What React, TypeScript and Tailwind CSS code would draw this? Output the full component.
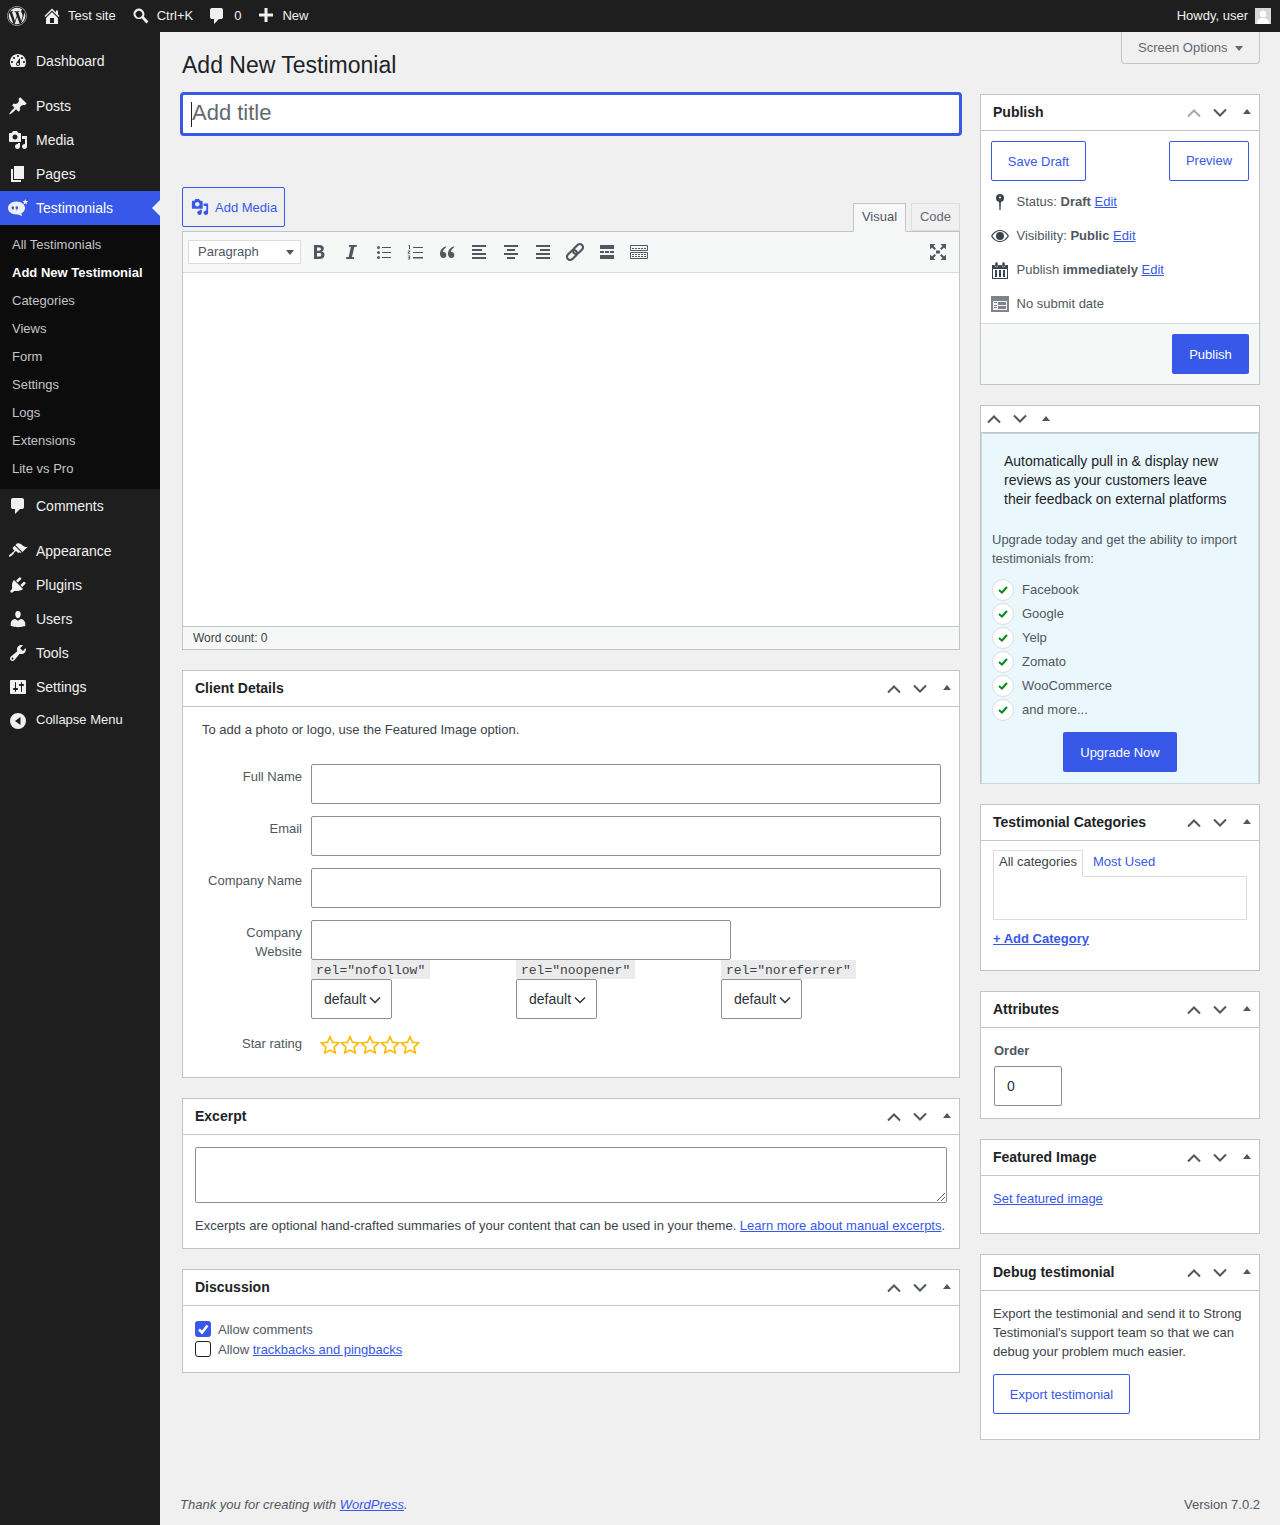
import React from "react";
import { FaWordpress } from "react-icons/fa";

const P = {
  home: "M16 8.5l1.53 1.53-1.06 1.06L10 4.62l-6.47 6.47-1.06-1.06L10 2.5l4 4v-2h2v4zm-6-2.46l6 5.99V18H4v-5.97zM12 17v-5H8v5h4z",
  comment: "M5 2h9q.82 0 1.41.59T16 4v7q0 .82-.59 1.41T14 13h-2l-5 5v-5H5q-.82 0-1.41-.59T3 11V4q0-.82.59-1.41T5 2z",
  plus: "M17 7.5v3h-5.5V16h-3v-5.5H3v-3h5.5V2h3v5.5H17z",
  dashboard: "M3.76 16h12.48c1.1-1.37 1.76-3.11 1.76-5 0-4.42-3.58-8-8-8s-8 3.58-8 8c0 1.89.66 3.63 1.76 5zM10 4c.55 0 1 .45 1 1s-.45 1-1 1-1-.45-1-1 .45-1 1-1zM6 6c.55 0 1 .45 1 1s-.45 1-1 1-1-.45-1-1 .45-1 1-1zm8 0c.55 0 1 .45 1 1s-.45 1-1 1-1-.45-1-1 .45-1 1-1zm-5.37 5.55L12 7v6c0 1.1-.9 2-2 2s-2-.9-2-2c0-.57.24-1.08.63-1.45zM4 10c.55 0 1 .45 1 1s-.45 1-1 1-1-.45-1-1 .45-1 1-1zm12 0c.55 0 1 .45 1 1s-.45 1-1 1-1-.45-1-1 .45-1 1-1zm-5 3c0-.55-.45-1-1-1s-1 .45-1 1 .45 1 1 1 1-.45 1-1z",
  pin: "M10.44 3.02l1.82-1.82 6.36 6.35-1.83 1.82c-1.05-.68-2.48-.57-3.41.36l-.75.75c-.92.93-1.04 2.35-.35 3.41l-1.83 1.82-2.41-2.41-2.8 2.79c-.42.42-3.38 2.71-3.8 2.29s1.86-3.39 2.28-3.81l2.79-2.79L4.1 9.36l1.83-1.82c1.05.69 2.48.57 3.4-.36l.75-.75c.93-.92 1.05-2.35.36-3.41z",
  media: "M13 11V4c0-.55-.45-1-1-1h-1.67L9 1H5L3.67 3H2c-.55 0-1 .45-1 1v7c0 .55.45 1 1 1h10c.55 0 1-.45 1-1zM7 4.5c1.38 0 2.5 1.12 2.5 2.5S8.38 9.5 7 9.5 4.5 8.38 4.5 7 5.62 4.5 7 4.5zM14 6h5v10.5c0 1.38-1.12 2.5-2.5 2.5S14 17.88 14 16.5s1.12-2.5 2.5-2.5c.17 0 .34.02.5.05V9h-3V6zm-4 8.05V13h2v3.5c0 1.38-1.12 2.5-2.5 2.5S7 17.88 7 16.5 8.12 14 9.5 14c.17 0 .34.02.5.05z",
  pages: "M6 15V2h10v13H6zm-1 1h8v2H3V5h2v11z",
  appearance: "M14.48 11.06L7.41 3.99l1.5-1.5c.5-.56 2.3-.47 3.51.32 1.21.8 1.43 1.28 2.91 2.1 1.18.64 2.45 1.26 4.45.85zm-.71.71L6.7 4.7 4.93 6.47c-.39.39-.39 1.02 0 1.41l1.06 1.06c.39.39.39 1.03 0 1.42-.6.6-1.43 1.11-2.21 1.69-.35.26-.7.53-1.01.84C1.43 13.23.4 14.75 1.1 15.45c.7.71 2.22-.33 3.56-1.67.31-.31.58-.66.85-1.02.57-.78 1.08-1.61 1.69-2.21.39-.39 1.02-.39 1.41 0l1.06 1.06c.39.39 1.02.39 1.41 0z",
  plugins: "M13.11 4.36L9.87 7.6 8 5.73l3.24-3.24c.35-.34 1.05-.2 1.56.32.52.51.66 1.21.31 1.55zm-8 1.77l.91-1.12 9.01 9.01-1.19.84c-.71.71-2.63 1.16-3.82 1.16H6.14L4.9 17.26c-.59.59-1.54.59-2.12 0-.59-.58-.59-1.53 0-2.12l1.24-1.24v-3.88c0-1.13.4-3.19 1.09-3.89zm7.26 3.97l3.24-3.24c.34-.35 1.04-.21 1.55.31.52.51.66 1.21.31 1.55l-3.24 3.25z",
  users: "M10 9.25c-2.27 0-2.73-3.44-2.73-3.44C7 4.02 7.82 2 9.97 2c2.16 0 2.98 2.02 2.71 3.81 0 0-.41 3.44-2.68 3.44zm0 2.57L12.72 10c2.39 0 4.52 2.33 4.52 4.53v2.49s-3.65 1.13-7.24 1.13c-3.65 0-7.24-1.13-7.24-1.13v-2.49c0-2.25 1.94-4.48 4.47-4.48z",
  tools: "M16.68 9.77c-1.34 1.34-3.3 1.67-4.95.99l-5.41 6.52c-.99.99-2.59.99-3.58 0s-.99-2.59 0-3.57l6.52-5.42c-.68-1.65-.35-3.61.99-4.95 1.28-1.28 3.12-1.62 4.72-1.06l-2.89 2.89 2.82 2.82 2.86-2.87c.53 1.58.18 3.39-1.08 4.67zM3.81 16.21c.4.39 1.04.39 1.43 0 .4-.4.4-1.04 0-1.43-.39-.4-1.03-.4-1.43 0-.39.39-.39 1.03 0 1.43z",
  settings: "M18 16V4c0-.55-.45-1-1-1H3c-.55 0-1 .45-1 1v12c0 .55.45 1 1 1h14c.55 0 1-.45 1-1zM8 11h1c.55 0 1 .45 1 1s-.45 1-1 1H8v1.5c0 .28-.22.5-.5.5s-.5-.22-.5-.5V13H6c-.55 0-1-.45-1-1s.45-1 1-1h1V5.5c0-.28.22-.5.5-.5s.5.22.5.5V11zm5-2h-1c-.55 0-1-.45-1-1s.45-1 1-1h1V5.5c0-.28.22-.5.5-.5s.5.22.5.5V7h1c.55 0 1 .45 1 1s-.45 1-1 1h-1v5.5c0 .28-.22.5-.5.5s-.5-.22-.5-.5V9z",
  collapse: "M10 2a8 8 0 1 1 0 16 8 8 0 0 1 0-16zm2.5 4L7 10l5.500 4V6z",
  search: "M12.14 4.78a5.3 5.3 0 1 0-1.36 7.36l4.5 5.36 2.2-2-4.6-5.1a5.3 5.3 0 0 0-.74-5.62zM9.8 10.9a3.3 3.3 0 1 1-3.7-5.5 3.3 3.3 0 0 1 3.7 5.5z",
  testimonials: "M8.5 3.5C13.2 3.5 17 6.4 17 10c0 2.300-1.500 4.300-3.900 5.500L14.500 18 10 16.400c-.5.1-1 .1-1.500.1C3.800 16.500 0 13.600 0 10s3.800-6.500 8.500-6.500zM5 8.200c-.9 0-1.500.7-1.500 1.500 0 .7.5 1.300 1.100 1.400 0 .5-.3.9-.7 1.100 1.200 0 2.100-1.200 2.100-2.500 0-.9-.4-1.500-1-1.500zM9 8.200c-.9 0-1.500.7-1.500 1.500 0 .7.5 1.300 1.100 1.400 0 .5-.3.9-.7 1.100 1.200 0 2.100-1.200 2.100-2.500 0-.9-.4-1.500-1-1.500zM17.300 1l.8 1.900 2 .2-1.500 1.300.5 2-1.800-1.100-1.800 1.100.5-2-1.500-1.300 2-.2z",
};

const Dash = ({ d, size = 20, className = "" }: { d: string; size?: number; className?: string }) => (
  <svg viewBox="0 0 20 20" width={size} height={size} fill="currentColor" className={className} fillRule="evenodd"><path d={d} /></svg>
);

const Main = ({ icon, label, active, small }: { icon: string; label: string; active?: boolean; small?: boolean }) => (
  <div className={`relative flex items-center h-[34px] pl-[8px] ${active ? "bg-[#3858e9] text-white" : "text-[#f0f0f1]"} ${small ? "text-[13px] text-[#e4e5e6]" : "text-[14px]"}`}>
    <span className={`w-[20px] h-[20px] flex items-center justify-center text-[#f0f0f1] ${small ? "-mt-[1px]" : ""}`}><Dash d={icon} /></span>
    <span className={small ? "ml-[8px] -mt-[2px]" : "ml-[8px]"}>{label}</span>
    {active && <span className="absolute right-0 top-[9px] w-0 h-0 border-y-[8px] border-y-transparent border-r-[8px] border-r-[#f0f0f1]" />}
  </div>
);

const Sub = ({ label, active }: { label: string; active?: boolean }) => (
  <div className={`h-[28px] flex items-center pl-[12px] text-[13px] ${active ? "font-bold text-white" : "text-[#c4c5c6]"}`}>{label}</div>
);

const Sidebar = () => (
  <aside className="w-[160px] shrink-0 bg-[#1e1e1e] pt-[12px] flex flex-col">
    <Main icon={P.dashboard} label="Dashboard" />
    <div className="h-[11px]" />
    <Main icon={P.pin} label="Posts" />
    <Main icon={P.media} label="Media" />
    <Main icon={P.pages} label="Pages" />
    <Main icon={P.testimonials} label="Testimonials" active />
    <div className="bg-[#0c0c0c] pt-[6px] pb-[6px]">
      {["All Testimonials", "Add New Testimonial", "Categories", "Views", "Form", "Settings", "Logs", "Extensions", "Lite vs Pro"].map((s, i) => (
        <Sub key={s} label={s} active={i === 1} />
      ))}
    </div>
    <Main icon={P.comment} label="Comments" />
    <div className="h-[11px]" />
    <Main icon={P.appearance} label="Appearance" />
    <Main icon={P.plugins} label="Plugins" />
    <Main icon={P.users} label="Users" />
    <Main icon={P.tools} label="Tools" />
    <Main icon={P.settings} label="Settings" />
    <Main icon={P.collapse} label="Collapse Menu" small />
  </aside>
);

const TopBar = () => (
  <header className="h-[32px] bg-[#1e1e1e] text-[#f0f0f1] text-[13px] flex items-center pl-[7px] pr-[9px] shrink-0">
    <FaWordpress size={20} className="text-[#e8e8e8] mr-[15px]" />
    <Dash d={P.home} className="mr-[6px]" />
    <span className="mr-[15px]">Test site</span>
    <Dash d={P.search} className="mr-[6px]" />
    <span className="mr-[14px]">Ctrl+K</span>
    <Dash d={P.comment} className="mr-[7px]" />
    <span className="mr-[15px]">0</span>
    <Dash d={P.plus} className="mr-[6px]" />
    <span>New</span>
    <span className="ml-auto mr-[7px]">Howdy, user</span>
    <span className="w-[16px] h-[16px] bg-[#d8d8d8] flex items-end justify-center overflow-hidden">
      <svg viewBox="0 0 16 16" width={16} height={16}><circle cx="8" cy="6" r="3.200" fill="#fff" /><ellipse cx="8" cy="15" rx="6" ry="5" fill="#fff" /></svg>
    </span>
  </header>
);

const Chevron = ({ up, muted }: { up?: boolean; muted?: boolean }) => (
  <svg width={16} height={10} viewBox="0 0 16 10" fill="none" stroke={muted ? "#a7aaad" : "#50575e"} strokeWidth={2}>
    <path d={up ? "M2 8.500l6-6 6 6" : "M2 1.500l6 6 6-6"} />
  </svg>
);

const Controls = ({ mutedUp, left }: { mutedUp?: boolean; left?: boolean }) => (
  <div className="flex items-center">
    <span className="w-[26px] flex justify-center"><Chevron up muted={mutedUp} /></span>
    <span className="w-[26px] flex justify-center"><Chevron /></span>
    <span className="w-[26px] flex justify-center pb-[2px]"><span className={`w-0 h-0 border-x-[4px] border-x-transparent border-b-[5px] border-b-[#50575e] ${left ? "" : "ml-[2px]"}`} /></span>
  </div>
);

const Panel = ({ title, mutedUp, children }: { title: string; mutedUp?: boolean; children: React.ReactNode }) => (
  <section className="bg-white border border-[#c3c4c7]">
    <div className="h-[36px] border-b border-[#c3c4c7] flex items-center justify-between pl-[12px]">
      <h2 className="text-[14px] font-bold text-[#1d2327]">{title}</h2>
      <Controls mutedUp={mutedUp} />
    </div>
    {children}
  </section>
);

const A = ({ children }: { children: React.ReactNode }) => <a className="text-[#3858e9] underline">{children}</a>;

const OutlineBtn = ({ children, className = "" }: { children: React.ReactNode; className?: string }) => (
  <span className={`h-[40px] inline-flex items-center justify-center border border-[#3858e9] rounded-[2px] text-[#3858e9] text-[13px] bg-white ${className}`}>{children}</span>
);
const PrimaryBtn = ({ children, className = "" }: { children: React.ReactNode; className?: string }) => (
  <span className={`h-[40px] inline-flex items-center justify-center pt-[2px] bg-[#3858e9] rounded-[2px] text-white text-[13px] ${className}`}>{children}</span>
);

const Ico = ({ children }: { children: React.ReactNode }) => (
  <svg viewBox="0 0 20 20" width={20} height={20} fill="#50575e">{children}</svg>
);

const toolbar: React.ReactNode[] = [
  <Ico key="b"><path fillRule="evenodd" d="M5 3h5.500c2.800 0 4.300 1.300 4.300 3.500 0 1.400-.7 2.400-1.900 2.900 1.600.4 2.600 1.600 2.600 3.300 0 2.700-1.900 4.300-5 4.300H5zm3 2.400v3.300h2.200c1.100 0 1.700-.6 1.700-1.700 0-1-.6-1.600-1.700-1.600zm0 5.600v3.500h2.400c1.300 0 2-.7 2-1.800s-.7-1.700-2-1.700z" /></Ico>,
  <Ico key="i"><path d="M8 3h8l-.3 1.700-2.400.4L11 14.900l2.200.4-.3 1.700H4.900l.3-1.700 2.400-.4L9.900 5.100 7.700 4.700z" /></Ico>,
  <Ico key="ul"><circle cx="5.500" cy="5.500" r="1.500" /><circle cx="5.500" cy="10.500" r="1.500" /><circle cx="5.500" cy="15.500" r="1.500" /><rect x="9" y="5" width="9" height="1" /><rect x="9" y="10" width="9" height="1" /><rect x="9" y="15" width="9" height="1" /></Ico>,
  <Ico key="ol"><rect x="8" y="5" width="10" height="1" /><rect x="8" y="10" width="10" height="1" /><rect x="8" y="15" width="10" height="1.500" /><path d="M4 3h1v4H4V4H3.200zM2.800 8.500h2.400v.9l-1.300 1.500h1.300v.8H2.700v-.8l1.400-1.600H2.800zM2.800 13.500h2.300v3.900H2.800v-.7h1.400v-.9H3.200v-.7h1v-.8H2.800z" /></Ico>,
  <Ico key="q"><path d="M9.500 4.200C5.500 5 3 8 3 12c0 2.300 1.400 4 3.300 4 1.700 0 3-1.300 3-3s-1.200-3-2.800-3c-.2 0-.5 0-.7.100.2-1.600 1.300-3 2.700-4zM17.500 4.200c-4 .8-6.500 3.800-6.500 7.800 0 2.300 1.400 4 3.300 4 1.700 0 3-1.300 3-3s-1.200-3-2.800-3c-.2 0-.5 0-.7.100.2-1.600 1.300-3 2.700-4z" /></Ico>,
  <Ico key="al"><rect x="3" y="3" width="14" height="2" /><rect x="3" y="7" width="10" height="2" /><rect x="3" y="11" width="14" height="2" /><rect x="3" y="15" width="14" height="2" /></Ico>,
  <Ico key="ac"><rect x="3" y="3" width="14" height="2" /><rect x="6" y="7" width="8" height="2" /><rect x="3" y="11" width="14" height="2" /><rect x="6" y="15" width="8" height="2" /></Ico>,
  <Ico key="ar"><rect x="3" y="3" width="14" height="2" /><rect x="7" y="7" width="10" height="2" /><rect x="3" y="11" width="14" height="2" /><rect x="3" y="15" width="14" height="2" /></Ico>,
  <svg key="l" viewBox="0 0 20 20" width={20} height={20} fill="none" stroke="#50575e" strokeWidth={2.200}>
    <g transform="rotate(-45 10 10)">
      <rect x="0" y="6.800" width="11.500" height="6.400" rx="3.200" />
      <rect x="8.500" y="6.800" width="11.500" height="6.400" rx="3.200" />
    </g>
  </svg>,
  <Ico key="m"><rect x="3" y="3" width="14" height="4" /><rect x="3" y="13" width="14" height="4" /><rect x="3" y="9" width="4" height="2" /><rect x="8" y="9" width="4" height="2" /><rect x="13" y="9" width="4" height="2" /></Ico>,
  <svg key="k" viewBox="0 0 20 20" width={20} height={20}>
    <path fill="none" stroke="#50575e" d="M1.500 3.500h17v5h-17zM1.500 10.500h17v6h-17z" />
    <path stroke="#50575e" strokeDasharray="2 1" d="M3 6.500h14M3 12.500h14M3 14.500h14" />
  </svg>,
];

const Editor = () => (
  <div className="border border-[#c3c4c7] bg-white h-[419px] flex flex-col">
    <div className="h-[41px] bg-[#f6f7f7] border-b border-[#dcdcde] flex items-center pl-[5px] pr-[11px] shrink-0">
      <div className="w-[113px] h-[24px] bg-white border border-[#dcdcde] flex items-center justify-between pl-[9px] pr-[6px] text-[13px] text-[#50575e]">
        Paragraph
        <span className="w-0 h-0 border-x-[4px] border-x-transparent border-t-[5px] border-t-[#50575e]" />
      </div>
      <div className="flex items-center ml-[2px]">
        {toolbar.map((t, i) => <span key={i} className="w-[32px] h-[24px] flex items-center justify-center">{t}</span>)}
      </div>
      <svg viewBox="0 0 20 20" width={20} height={20} fill="#50575e" className="ml-auto">
        <path d="M2 2h5.500L5.500 4l2.500 2.500L6.500 8 4 5.500 2 7.500zM18 2v5.500L16 5.500 13.500 8 12 6.500 14.500 4l-2-2zM2 18v-5.500L4 14.500 6.500 12 8 13.500 5.500 16l2 2zM18 18h-5.500l2-2L12 13.500l1.500-1.500 2.500 2.500 2-2z" />
        <rect x="8" y="8.500" width="4" height="3" />
      </svg>
    </div>
    <div className="flex-1" />
    <div className="h-[23px] border-t border-[#c3c4c7] bg-[#f6f7f7] flex items-center pl-[10px] text-[12px] text-[#3c434a] shrink-0">Word count: 0</div>
  </div>
);

const Field = ({ label, narrow }: { label: React.ReactNode; narrow?: boolean }) => (
  <div className="flex h-[40px]">
    <label className="w-[119px] shrink-0 text-right text-[13px] leading-[19px] pt-[3px] text-[#50575e]">{label}</label>
    <input className={`ml-[9px] h-[40px] border border-[#8c8f94] rounded-[2px] bg-white ${narrow ? "w-[420px]" : "w-[630px]"}`} />
  </div>
);

const RelSelect = ({ rel }: { rel: string }) => (
  <div className="w-[205px]">
    <code className="block w-fit h-[19px] leading-[21px] px-[5px] bg-[#ebebeb] text-[#3c434a] text-[13px] font-['Liberation_Mono',monospace]">{rel}</code>
    <div className="w-[81px] h-[40px] border border-[#8c8f94] rounded-[2px] bg-white flex items-center pl-[12px] text-[14px] text-[#2c3338]">
      default
      <svg width={12} height={8} viewBox="0 0 12 8" fill="none" stroke="#2c3338" strokeWidth={1.500} className="ml-[3px] mt-[1px]"><path d="M1 1.500l5 5 5-5" /></svg>
    </div>
  </div>
);

const Star = () => (
  <svg viewBox="0 0 20 20" width={20} height={20} fill="none" stroke="#ffb900" strokeWidth={1.600} strokeLinejoin="miter">
    <path d="M10 1.800l2.500 5.500 6 .7-4.400 4.100 1.200 5.900L10 15.100 4.700 18l1.200-5.900L1.500 8l6-.7z" />
  </svg>
);

const ClientDetails = () => (
  <Panel title="Client Details">
    <div className="pb-[22px] text-[13px] text-[#3c434a]">
      <p className="pl-[19px] pt-[13px] leading-[19px] h-[57px]">To add a photo or logo, use the Featured Image option.</p>
      <div className="flex flex-col gap-[12px]">
        <Field label="Full Name" />
        <Field label="Email" />
        <Field label="Company Name" />
        <Field label={<>Company<br />Website</>} narrow />
      </div>
      <div className="flex ml-[128px]">
        <RelSelect rel={'rel="nofollow"'} />
        <RelSelect rel={'rel="noopener"'} />
        <RelSelect rel={'rel="noreferrer"'} />
      </div>
      <div className="flex items-center mt-[16px] h-[20px]">
        <span className="w-[119px] text-right text-[#50575e] -mt-[3px]">Star rating</span>
        <span className="flex ml-[18px]"><Star /><Star /><Star /><Star /><Star /></span>
      </div>
    </div>
  </Panel>
);

const Excerpt = () => (
  <Panel title="Excerpt">
    <div className="px-[12px] pt-[12px] pb-[13px] text-[13px] text-[#3c434a]">
      <div className="relative h-[56px] border border-[#8c8f94] rounded-[2px] bg-white">
        <svg width={8} height={8} viewBox="0 0 8 8" className="absolute right-[1px] bottom-[1px]" stroke="#666" fill="none"><path d="M8 0L0 8M8 4L4 8" /></svg>
      </div>
      <p className="mt-[13px] leading-[19px] whitespace-nowrap">Excerpts are optional hand-crafted summaries of your content that can be used in your theme. <A>Learn more about manual excerpts</A>.</p>
    </div>
  </Panel>
);

const Discussion = () => (
  <Panel title="Discussion">
    <div className="px-[12px] pt-[15px] pb-[15px] flex flex-col gap-[4px] text-[13px] text-[#50575e]">
      <div className="flex items-center gap-[7px] h-[16px]">
        <span className="w-[16px] h-[16px] rounded-[3px] bg-[#3858e9] flex items-center justify-center">
          <svg width={12} height={12} viewBox="0 0 12 12" fill="none" stroke="#fff" strokeWidth={2.500}><path d="M2 6.500l3 3 5.500-7" /></svg>
        </span>
        <span className="pt-[2px]">Allow comments</span>
      </div>
      <div className="flex items-center gap-[7px] h-[16px]">
        <span className="w-[16px] h-[16px] rounded-[3px] border border-[#1e1e1e] bg-white" />
        <span className="pt-[2px]">Allow <A>trackbacks and pingbacks</A></span>
      </div>
    </div>
  </Panel>
);

const MetaRow = ({ icon, children }: { icon: React.ReactNode; children: React.ReactNode }) => (
  <div className="h-[34px] flex items-center pl-[10px] text-[13px] text-[#50575e]">
    <span className="w-[18px] h-[20px] flex items-center justify-center">{icon}</span>
    <span className="ml-[7.5px] -mt-[1px]">{children}</span>
  </div>
);

const Publish = () => (
  <Panel title="Publish" mutedUp>
    <div className="px-[10px] pt-[10px] flex justify-between">
      <OutlineBtn className="w-[95px] pt-[2px]">Save Draft</OutlineBtn>
      <OutlineBtn className="w-[80px]">Preview</OutlineBtn>
    </div>
    <div className="pt-[4px] pb-[3px] h-[142px]">
      <MetaRow icon={<svg width={10} height={18} viewBox="0 0 10 18" fill="#3c434a"><circle cx="5" cy="5" r="4" /><path d="M4 6h2l-.4 11h-1.200z" /><circle cx="5" cy="4.500" r="1" fill="#fff" /></svg>}><>Status: <b>Draft</b> <A>Edit</A></></MetaRow>
      <MetaRow icon={<svg width={18} height={14} viewBox="0 0 18 14" fill="#3c434a"><path fillRule="evenodd" d="M9 1c3.800 0 7 2.400 9 6-2 3.600-5.200 6-9 6s-7-2.400-9-6c2-3.600 5.200-6 9-6zM1.400 7C3.200 10 5.900 12 9 12s5.800-2 7.600-5C14.800 4 12.100 2 9 2S3.200 4 1.400 7zM9 3a4 4 0 1 1 0 8 4 4 0 0 1 0-8z" /></svg>}><>Visibility: <b>Public</b> <A>Edit</A></></MetaRow>
      <MetaRow icon={<svg width={16} height={17} viewBox="0 0 16 17">
        <rect x="0" y="3" width="16" height="14" fill="#3c434a" />
        <rect x="1" y="7" width="14" height="9" fill="#fff" />
        <rect x="3" y="8" width="2" height="7" fill="#3c434a" />
        <rect x="7" y="8" width="2" height="7" fill="#3c434a" />
        <rect x="11" y="8" width="2" height="7" fill="#3c434a" />
        <rect x="3" y="0" width="3" height="5" rx="1.500" fill="#3c434a" stroke="#fff" strokeWidth={0.500} />
        <rect x="10" y="0" width="3" height="5" rx="1.500" fill="#3c434a" stroke="#fff" strokeWidth={0.500} />
      </svg>}><>Publish <b>immediately</b> <A>Edit</A></></MetaRow>
      <MetaRow icon={<svg width={18} height={16} viewBox="0 0 18 16">
        <rect width="18" height="16" fill="#7f8286" />
        <rect x="2" y="5" width="14" height="9" fill="#f4f4f4" />
        <rect x="3" y="6" width="3" height="1" fill="#7f8286" />
        <rect x="7" y="6" width="8" height="3" fill="#7f8286" />
        <rect x="3" y="9" width="3" height="1" fill="#7f8286" />
        <rect x="3" y="11" width="3" height="1" fill="#7f8286" />
        <rect x="7" y="10" width="8" height="3" fill="#7f8286" />
      </svg>}>No submit date</MetaRow>
    </div>
    <div className="border-t border-[#dcdcde] bg-[#f6f7f7] h-[61px] pt-[10px] pr-[10px] flex justify-end">
      <PrimaryBtn className="w-[77px]">Publish</PrimaryBtn>
    </div>
  </Panel>
);

const Upgrade = () => (
  <section className="bg-white border border-[#c3c4c7]">
    <div className="h-[27px] flex items-center border-b border-[#c3c4c7]"><Controls left /></div>
    <div className="bg-[#eaf7fd] border border-[#c9d6dc] -mb-px pl-[10px] pt-[18px] pb-[11px] text-[13px] text-[#50575e]">
      <p className="pl-[12px] text-[14px] leading-[19px] text-[#1d2327]">Automatically pull in &amp; display new<br />reviews as your customers leave<br />their feedback on external platforms</p>
      <p className="mt-[21px] leading-[19px]">Upgrade today and get the ability to import<br />testimonials from:</p>
      <ul className="mt-[10px]">
        {["Facebook", "Google", "Yelp", "Zomato", "WooCommerce", "and more..."].map((t) => (
          <li key={t} className="h-[24px] flex items-center">
            <span className="w-[22px] h-[22px] rounded-full bg-white border border-[#dedede] flex items-center justify-center">
              <svg width={10} height={8} viewBox="0 0 10 8" fill="none" stroke="#008a20" strokeWidth={2}><path d="M1 4l3 2.500L9 1" /></svg>
            </span>
            <span className="ml-[8px] -mt-[1px]">{t}</span>
          </li>
        ))}
      </ul>
      <div className="flex justify-center mt-[10px] pr-[10px]"><PrimaryBtn className="w-[114px]">Upgrade Now</PrimaryBtn></div>
    </div>
  </section>
);

const Categories = () => (
  <Panel title="Testimonial Categories">
    <div className="px-[12px] pt-[9px] pb-[22px] text-[13px]">
      <div className="flex items-end relative z-10">
        <span className="h-[27px] w-[90px] pb-[3px] border border-[#dcdcde] border-b-white bg-white flex items-center justify-center text-[#3c434a]">All categories</span>
        <span className="ml-[10px] h-[27px] pb-[3px] flex items-center text-[#3858e9]">Most Used</span>
      </div>
      <div className="h-[44px] border border-[#dcdcde] -mt-px" />
      <div className="mt-[10px] font-bold leading-[18px]"><A>+ Add Category</A></div>
    </div>
  </Panel>
);

const Attributes = () => (
  <Panel title="Attributes">
    <div className="px-[13px] pt-[14px] pb-[12px] text-[13px] text-[#3c434a]">
      <div className="font-bold leading-[18px] text-[#50575e]">Order</div>
      <div className="w-[68px] h-[40px] mt-[6px] border border-[#8c8f94] rounded-[2px] flex items-center pl-[12px] text-[14px] text-[#2c3338]">0</div>
    </div>
  </Panel>
);

const Featured = () => (
  <Panel title="Featured Image">
    <div className="px-[12px] pt-[14px] pb-[25px] text-[13px] leading-[18px]"><A>Set featured image</A></div>
  </Panel>
);

const Debug = () => (
  <Panel title="Debug testimonial">
    <div className="px-[12px] pt-[13px] pb-[25px] text-[13px] leading-[19px] text-[#3c434a]">
      <p>Export the testimonial and send it to Strong<br />Testimonial's support team so that we can<br />debug your problem much easier.</p>
      <OutlineBtn className="w-[137px] mt-[13px]">Export testimonial</OutlineBtn>
    </div>
  </Panel>
);

export default function App() {
  return (
    <div className="w-[1280px] h-[1525px] flex flex-col bg-[#f0f0f1] overflow-hidden font-['Liberation_Sans',Arial,sans-serif]">
      <TopBar />
      <div className="flex flex-1 min-h-0">
        <Sidebar />
        <main className="relative flex-1 pl-[20px] pr-[20px] flex flex-col min-w-0">
          <div className="absolute right-[20px] top-0 w-[139px] h-[32px] border border-t-0 border-[#c3c4c7] rounded-b-[4px] bg-[#f0f0f1] flex items-center pl-[16px] text-[13px] text-[#646970]">
            Screen Options
            <span className="ml-[7px] mt-[2px] w-0 h-0 border-x-[4px] border-x-transparent border-t-[5px] border-t-[#646970]" />
          </div>
          <div className="ml-[2px]">
            <h1 className="pt-[19px] h-[60px] text-[23px] leading-[29px] text-[#1d2327]">Add New Testimonial</h1>
            <div className="flex gap-[20px]">
              <div className="w-[778px] shrink-0 flex flex-col">
                <div className="relative -mx-[2px] h-[44px]">
                  <input placeholder="Add title" className="w-full h-full bg-white border-[3px] border-[#3858e9] rounded-[4px] pl-[9px] pb-[2px] text-[22px] text-[#2c3338] placeholder:text-[#646970] outline-none" />
                  <span className="absolute left-[11px] top-[10px] w-px h-[25px] bg-[#1d2327]" />
                </div>
                <div className="mt-[51px] h-[45px] flex justify-between">
                  <span className="w-[103px] h-[40px] border border-[#3858e9] rounded-[2px] flex items-center pl-[8px] text-[13px] text-[#3858e9]">
                    <Dash d={P.media} size={18} className="mr-[6px]" /><span className="pt-[2px]">Add Media</span>
                  </span>
                  <div className="flex items-end gap-[5px] relative z-10 pt-[16px]">
                    <span className="w-[53px] h-[29px] pb-[2px] border border-[#c3c4c7] border-b-[#f6f7f7] bg-[#f6f7f7] flex items-center justify-center text-[13px] text-[#50575e]">Visual</span>
                    <span className="w-[49px] h-[28px] mb-px border border-[#dcdcde] bg-[#f0f0f1] flex items-center justify-center text-[13px] text-[#646970]">Code</span>
                  </div>
                </div>
                <div className="-mt-px"><Editor /></div>
                <div className="mt-[20px] flex flex-col gap-[20px]">
                  <ClientDetails />
                  <Excerpt />
                  <Discussion />
                </div>
              </div>
              <div className="w-[280px] shrink-0 pt-[2px] flex flex-col gap-[20px]">
                <Publish />
                <Upgrade />
                <Categories />
                <Attributes />
                <Featured />
                <Debug />
              </div>
            </div>
          </div>
          <footer className="mt-auto h-[30px] flex justify-between text-[13px] text-[#50575e]">
            <span className="italic">Thank you for creating with <A>WordPress</A>.</span>
            <span>Version 7.0.2</span>
          </footer>
        </main>
      </div>
    </div>
  );
}
